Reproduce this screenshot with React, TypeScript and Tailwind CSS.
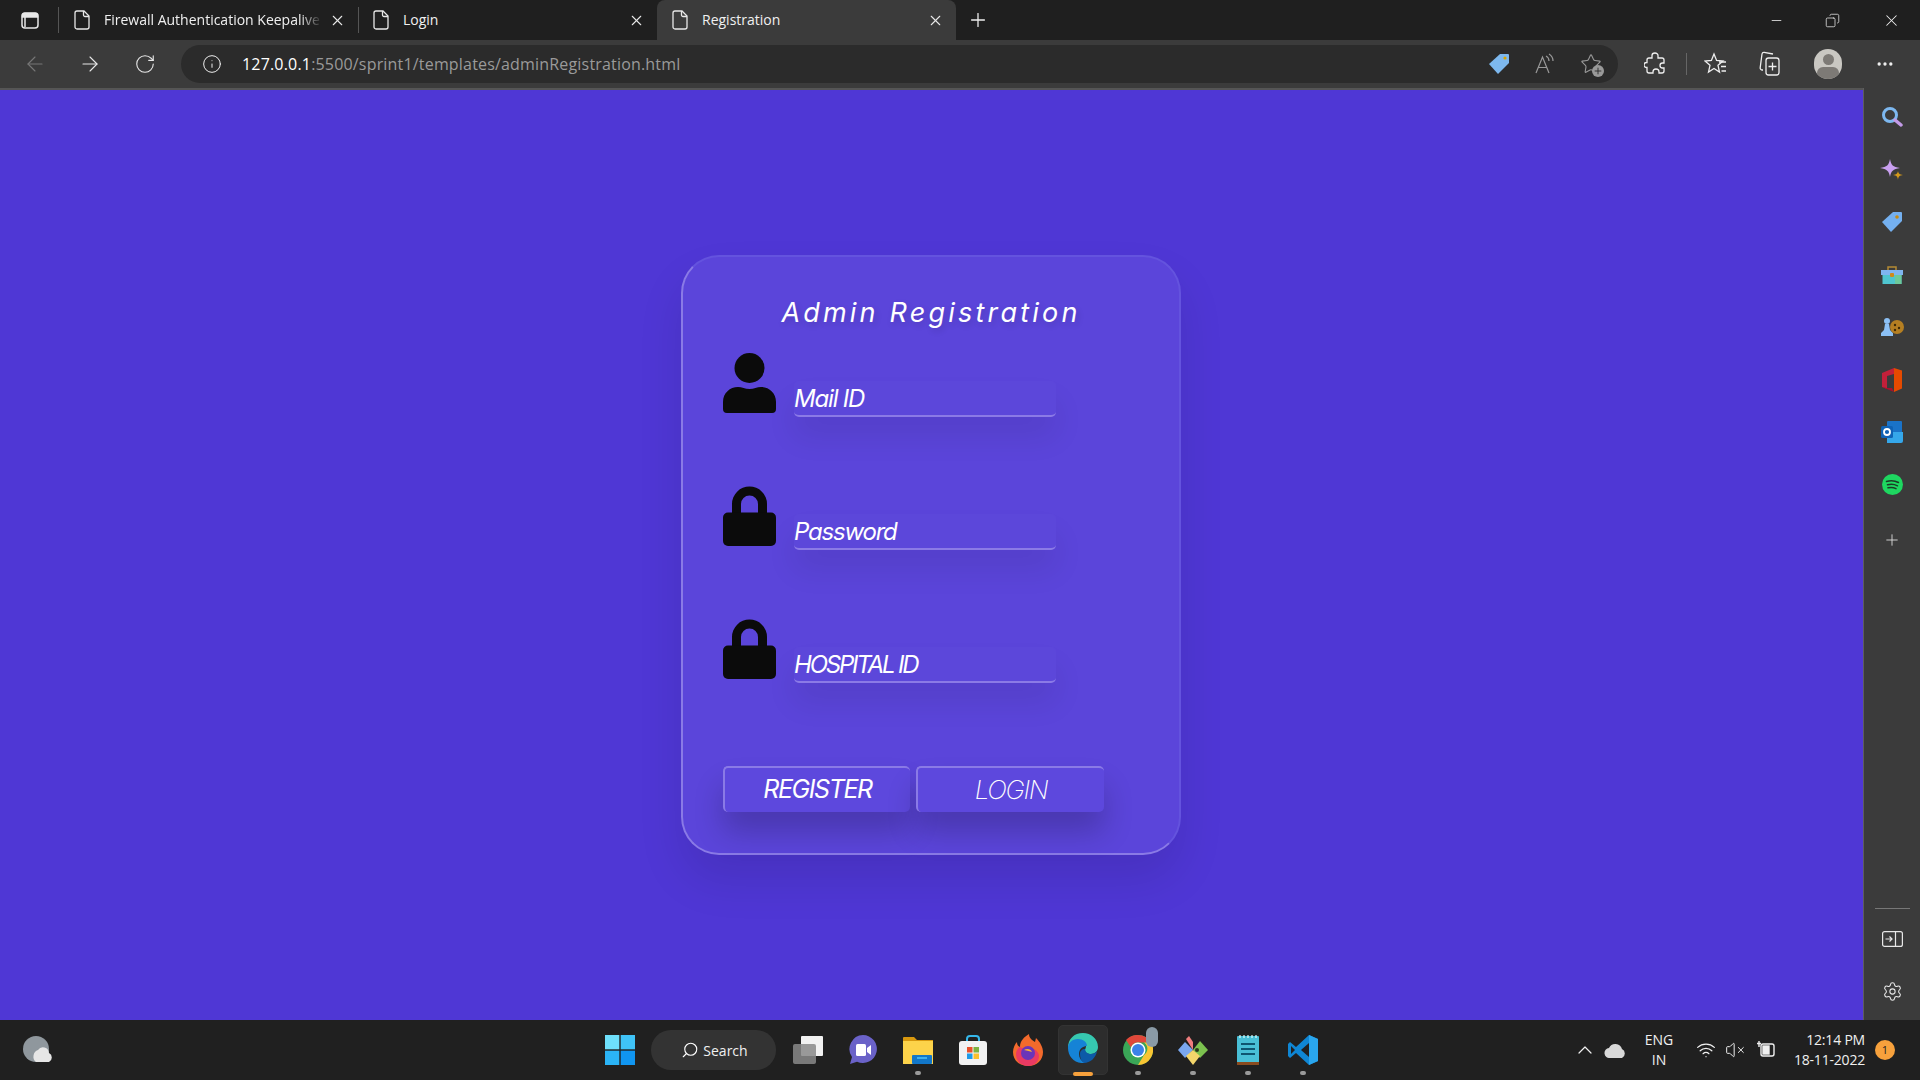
import React from "react"
import {
  ArrowLeft,
  ArrowRight,
  ChevronUp,
  Copy,
  Info,
  Minus,
  MoreHorizontal,
  Plus,
  RotateCw,
  Search,
  Settings,
  Star,
  VolumeX,
  Wifi,
  X,
} from "lucide-react"

const FileIcon = () => (
  <svg width="16" height="20" viewBox="0 0 16 20" fill="none" stroke="#e8e8e8" strokeWidth="1.3" className="shrink-0">
    <path d="M3 1h7l5 5v11a2 2 0 0 1-2 2H3a2 2 0 0 1-2-2V3a2 2 0 0 1 2-2z" />
    <path d="M9.5 1v4a1.5 1.5 0 0 0 1.5 1.5h4" />
  </svg>
)

const Tab = ({ title, active = false, fade = false }: { title: string; active?: boolean; fade?: boolean }) => (
  <div
    className={`flex items-center h-[40px] w-[299px] pl-[15px] pr-[12px] shrink-0 ${
      active ? "bg-[#3b3b3b] rounded-t-[8px]" : ""
    }`}
  >
    <FileIcon />
    <div
      className={`ml-[14px] flex-1 overflow-hidden whitespace-nowrap pb-[1px] text-[14px] text-[#f0f0f0] ${
        fade ? "[mask-image:linear-gradient(to_right,black_90%,transparent)]" : ""
      }`}
    >
      {title}
    </div>
    <X size={17} strokeWidth={1.5} className="ml-[7px] shrink-0 text-[#e8e8e8]" />
  </div>
)

const TabBar = () => (
  <div className="flex h-[40px] items-center bg-[#1f1f1f]">
    <div className="flex w-[58px] justify-center pl-[2px]">
      <svg width="18" height="17" viewBox="0 0 18 17" fill="none" stroke="#e8e8e8" strokeWidth="1.5">
        <rect x="1" y="1" width="16" height="15" rx="3" />
        <path d="M1.5 3.5a2 2 0 0 1 2-2h11a2 2 0 0 1 2 2V5h-15z" fill="#e8e8e8" />
        <path d="M4 5v10" />
      </svg>
    </div>
    <div className="h-[26px] w-px bg-[#555]" />
    <Tab title="Firewall Authentication Keepalive" fade />
    <div className="h-[26px] w-px bg-[#555]" />
    <div className="-ml-[1px]">
      <Tab title="Login" />
    </div>
    <Tab title="Registration" active />
    <Plus size={22} strokeWidth={1.4} className="ml-[11px] text-[#eee]" />
    <div className="ml-auto flex items-center text-[#eee]">
      <Minus size={15} strokeWidth={1.3} className="mr-[41px]" />
      <Copy size={15} strokeWidth={1.2} className="mr-[42px] -scale-x-100" />
      <X size={19} strokeWidth={1.3} className="mr-[19px]" />
    </div>
  </div>
)

const AddressBar = () => (
  <div className="flex h-[48px] items-center bg-[#3b3b3b]">
    <div className="flex w-[181px] shrink-0 items-center pl-[23px]">
      <ArrowLeft size={24} strokeWidth={1.1} className="text-[#777]" />
      <ArrowRight size={24} strokeWidth={1.1} className="ml-[31px] text-[#e8e8e8]" />
      <RotateCw size={22} strokeWidth={1.2} className="ml-[32px] text-[#e8e8e8]" />
    </div>
    <div className="flex h-[38px] w-[1437px] items-center rounded-full bg-[#2b2b2b] pl-[21px]">
      <Info size={20} strokeWidth={1.2} className="text-[#eee]" />
      <div className="ml-[20px] text-[16px] tracking-[0.18px] text-[#9a9a9a]">
        <span className="text-white">127.0.0.1</span>:5500/sprint1/templates/adminRegistration.html
      </div>
      <div className="ml-auto flex items-center pr-[16px]">
        <svg width="22" height="22" viewBox="0 0 22 22">
          <path d="M12 1h8a1 1 0 0 1 1 1v8L10 21 1 11z" fill="#7db8ee" />
          <circle cx="17" cy="5" r="1.6" fill="#d9a400" />
        </svg>
        <svg width="22" height="22" viewBox="0 0 22 22" fill="none" stroke="#999" strokeWidth="1.200" className="ml-[24px]">
          <path d="M2 20L8.500 4 15 20M4.500 14.500h8" />
          <path d="M12 3c2 1 3 2.500 3 5M15 1c2.500 1.500 4 3.500 4 7" />
        </svg>
        <div className="relative ml-[24px]">
          <Star size={22} strokeWidth={1.2} className="text-[#999]" />
          <div className="absolute -bottom-[2px] -right-[2px] flex h-[12px] w-[12px] items-center justify-center rounded-full bg-[#999]">
            <Plus size={10} strokeWidth={2} className="text-[#222]" />
          </div>
        </div>
      </div>
    </div>
    <svg width="22" height="24" viewBox="0 0 22 24" fill="none" stroke="#eee" strokeWidth="1.300" className="ml-[26px]">
      <path d="M8 3.500a3 2.500 0 0 1 6 0V6h4a2 2 0 0 1 2 2v3h-1.500a2.500 2.500 0 0 0 0 5H20v3a2 2 0 0 1-2 2h-3v-1a3 3 0 0 0-6 0v1H5a2 2 0 0 1-2-2v-3.500h-.5a2.500 2.500 0 0 1 0-5H3V8a2 2 0 0 1 2-2h3z" />
    </svg>
    <div className="ml-[20px] h-[22px] w-px bg-[#666]" />
    <svg width="24" height="24" viewBox="0 0 24 24" fill="none" stroke="#eee" strokeWidth="1.300" className="ml-[17px]">
      <path d="M10 2l2.600 6.500 6.400.5-5 4.300 1.500 6.700-5.500-3.500L4.500 20 6 13.300 1 9l6.400-.5z" />
      <path d="M15 10h7M17 14.500h5M17.500 19h4.500" />
    </svg>
    <svg width="24" height="26" viewBox="0 0 24 26" fill="none" stroke="#eee" strokeWidth="1.3" className="ml-[30px]">
      <path d="M5 19H4a2 2 0 0 1-1.800-2.400L4 3a2 2 0 0 1 2.200-1.700L15 3" />
      <rect x="8" y="7" width="13" height="17" rx="2.5" />
      <path d="M14.500 11.500v8M10.500 15.500h8" />
    </svg>
    <div className="ml-[32px] flex h-[30px] w-[28px] flex-col items-center overflow-hidden rounded-full bg-[#c9c7c2]">
      <div className="mt-[5px] h-[12px] w-[11px] rounded-full bg-[#7d7a76]" />
      <div className="mt-[2px] h-[14px] w-[22px] rounded-full bg-[#7d7a76]" />
    </div>
    <MoreHorizontal size={20} strokeWidth={2} className="ml-[33px] text-[#eee]" />
  </div>
)

const UserIcon = () => (
  <svg width="53" height="60" viewBox="0 0 53 60" fill="#0b0b0b" className="shrink-0">
    <circle cx="26.5" cy="15" r="15" />
    <path d="M15 34c4 0 7 2 11.500 2S34 34 38 34c8 0 15 6 15 15v7a4 4 0 0 1-4 4H4a4 4 0 0 1-4-4v-7c0-9 7-15 15-15z" />
  </svg>
)

const LockIcon = () => (
  <svg width="53" height="60" viewBox="0 0 53 60" fill="#0b0b0b" className="shrink-0">
    <path d="M9 27V18a17.500 17.500 0 0 1 35 0v9h-9V18a8.500 8.500 0 0 0-17 0v9z" />
    <rect y="26.500" width="53" height="33.500" rx="5" />
  </svg>
)

const Field = ({
  icon,
  placeholder,
  narrow = false,
}: {
  icon: React.ReactNode
  placeholder: string
  narrow?: boolean
}) => (
  <div className="flex items-start">
    {icon}
    <input
      type="text"
      placeholder={placeholder}
      className={`ml-[18px] mt-[28px] h-[36px] w-[262px] rounded-[5px] border-b-[2px] border-[#8b7ae6] bg-white/[0.01] pt-[1px] text-[24px] italic text-white shadow-[0_20px_30px_rgba(0,0,0,0.08)] outline-none placeholder:text-white ${
        narrow ? "tracking-[-2.2px]" : "tracking-[-1.2px]"
      }`}
    />
  </div>
)

const RegistrationCard = () => (
  <div className="mr-[1px] flex h-[600px] w-[500px] flex-col rounded-[38px] border-[2px] border-b-[#8a7ae6] border-l-[#8a7ae6] border-r-[#6453de] border-t-[#6453de] bg-[#5b45da] pl-[40px] shadow-[0_25px_45px_rgba(0,0,0,0.1)] [font-family:Inter,'Open_Sans',sans-serif]">
    <h1 className="-ml-[40px] mt-[36px] h-[40px] text-center text-[27px] font-normal italic leading-[40px] tracking-[3.2px] text-white [text-shadow:2px_3px_6px_rgba(0,0,0,0.15)]">
      Admin Registration
    </h1>
    <div className="mt-[20px] flex flex-col gap-[69px]">
      <Field icon={<UserIcon />} placeholder="Mail ID" />
      <Field icon={<LockIcon />} placeholder="Password" />
      <Field icon={<LockIcon />} placeholder="HOSPITAL ID" narrow />
    </div>
    <div className="mt-[83px] flex gap-[6px]">
      <button className="h-[46px] w-[187px] rounded-[5px] border-l-[2px] border-t-[2px] border-[#8a7ae6] bg-[#5d48dd] text-[25px] font-normal italic tracking-[-1.4px] text-white shadow-[0_20px_30px_rgba(0,0,0,0.2)]">
        REGISTER
      </button>
      <button className="h-[46px] w-[188px] rounded-[5px] border-l-[2px] border-t-[2px] border-[#8a7ae6] bg-[#5d48dd] pb-[2px] text-[26px] font-extralight italic tracking-[-1.4px] text-white shadow-[0_20px_30px_rgba(0,0,0,0.2)]">
        LOGIN
      </button>
    </div>
  </div>
)

const Slot = ({ children }: { children: React.ReactNode }) => (
  <div className="flex h-[52.5px] items-center justify-center">{children}</div>
)

const BottomSlot = ({ children }: { children: React.ReactNode }) => (
  <div className="flex h-[52px] items-center justify-center">{children}</div>
)

const Sidebar = () => (
  <div className="flex w-[57px] shrink-0 flex-col items-center border-l border-[#5e5e5e] bg-[#3b3b3b] pb-[3px] pt-[3px]">
    <Slot>
      <svg width="22" height="22" viewBox="0 0 22 22" fill="none">
        <circle cx="9" cy="9" r="6.500" stroke="#7db8f0" strokeWidth="3" />
        <path d="M14 14l6 5" stroke="#c39be8" strokeWidth="3.500" strokeLinecap="round" />
      </svg>
    </Slot>
    <Slot>
      <svg width="24" height="24" viewBox="0 0 24 24">
        <path d="M10 1c1 6 3 8 10 9-7 1-9 3-10 9-1-6-3-8-10-9 7-1 9-3 10-9z" fill="#c9a0f0" />
        <path d="M18 13c.4 2.500 1.500 3.600 5 4-3.500.4-4.600 1.500-5 5-.4-3.500-1.500-4.600-5-5 3.500-.4 4.600-1.500 5-4z" fill="#d49a1c" />
      </svg>
    </Slot>
    <Slot>
      <svg width="22" height="22" viewBox="0 0 22 22">
        <path d="M12 1h8a1 1 0 0 1 1 1v8L10 21 1 11z" fill="#74b0f0" />
        <circle cx="16" cy="6" r="1.800" fill="#c98a10" />
      </svg>
    </Slot>
    <Slot>
      <svg width="22" height="20" viewBox="0 0 22 20">
        <path d="M7 5V2h8v3" fill="none" stroke="#b48a35" strokeWidth="1.500" />
        <rect y="5" width="22" height="5" fill="#7fb5f0" />
        <rect x="1.500" y="10" width="19" height="9" fill="#4fc5cf" />
        <rect x="14" y="10" width="6.500" height="9" fill="#6dc99b" />
        <rect x="9" y="8" width="4" height="4" rx="1" fill="#d08a1a" />
      </svg>
    </Slot>
    <Slot>
      <svg width="24" height="20" viewBox="0 0 24 20">
        <circle cx="7" cy="4" r="3" fill="#8cc0f5" />
        <path d="M5 7h4l1 6 3 3v3H1v-3l3-3z" fill="#8cc0f5" />
        <circle cx="17" cy="10" r="7" fill="#b57f22" />
        <circle cx="15" cy="8" r="1.200" fill="#3e2a08" />
        <circle cx="19" cy="11" r="1.200" fill="#3e2a08" />
        <circle cx="15" cy="13" r="1.200" fill="#3e2a08" />
      </svg>
    </Slot>
    <Slot>
      <svg width="22" height="24" viewBox="0 0 22 24">
        <path d="M13 0l8 2.500v18L13 24V0z" fill="#e54a00" />
        <path d="M13 0L1 5v14l5 2V8l7-2z" fill="#c3203a" />
        <path d="M1 19l12 5-2-4-5 0z" fill="#a8102c" />
      </svg>
    </Slot>
    <Slot>
      <svg width="22" height="22" viewBox="0 0 22 22">
        <rect x="6" y="0" width="15" height="20" rx="1" fill="#1a73c8" />
        <path d="M6 11h16v9a2 2 0 0 1-2 2H6z" fill="#35a7ea" />
        <rect x="0" y="5" width="12" height="12" rx="1.500" fill="#0f62b5" />
        <circle cx="6" cy="11" r="3" fill="none" stroke="#fff" strokeWidth="1.800" />
      </svg>
    </Slot>
    <Slot>
      <svg width="21" height="21" viewBox="0 0 21 21" fill="none">
        <circle cx="10.500" cy="10.500" r="10.500" fill="#1ed760" />
        <path d="M4.500 7.500c4-1.200 8.500-.8 12 1M5.500 10.800c3.500-1 7-.6 10 1M6 13.800c3-.7 5.500-.5 8 .8" stroke="#1c3a26" strokeWidth="1.500" strokeLinecap="round" />
      </svg>
    </Slot>
    <div className="flex h-[58px] items-center justify-center">
      <Plus size={18} strokeWidth={1.2} className="text-[#ddd]" />
    </div>
    <div className="flex-1" />
    <div className="mb-[4px] h-px w-[35px] bg-[#777]" />
    <BottomSlot>
      <svg width="21" height="16" viewBox="0 0 21 16" fill="none" stroke="#e8e8e8" strokeWidth="1.200">
        <rect x="0.600" y="0.600" width="19.800" height="14.800" rx="2" />
        <path d="M13.500 1v14M3.500 8h6.500M7.500 5.500L10 8l-2.500 2.500" />
      </svg>
    </BottomSlot>
    <BottomSlot>
      <Settings size={21} strokeWidth={1.2} className="text-[#e8e8e8]" />
    </BottomSlot>
  </div>
)

const TaskIcon = ({
  children,
  running = false,
  active = false,
}: {
  children: React.ReactNode
  running?: boolean
  active?: boolean
}) => (
  <div className="relative flex h-[60px] w-[55px] items-center justify-center">
    {active && <div className="absolute left-[3px] top-[5px] h-[50px] w-[50px] rounded-[5px] border border-[#333] bg-[#2d2d2d]" />}
    <div className="relative flex">{children}</div>
    {running && <div className="absolute bottom-[5px] left-[25px] h-[4px] w-[6px] rounded-full bg-[#9a9a9a]" />}
    {active && <div className="absolute bottom-[4px] left-[18px] h-[4px] w-[20px] rounded-full bg-[#f7a13c]" />}
  </div>
)

const Taskbar = () => (
  <div className="flex h-[60px] items-center bg-[#202020]">
    <div className="flex w-[592px] shrink-0 pl-[22px]">
      <svg width="30" height="30" viewBox="0 0 30 30">
        <circle cx="14" cy="14" r="13" fill="#8f979d" />
        <path d="M14 27a7 7 0 0 1 2-12 6 6 0 0 1 11 3 5 5 0 0 1 0 9z" fill="#e6e6e6" />
      </svg>
    </div>
    <div className="flex w-[55px] justify-center">
      <svg width="30" height="30" viewBox="0 0 30 30">
        <rect width="14.300" height="14.300" fill="#6ee0fb" />
        <rect x="15.700" width="14.300" height="14.300" fill="#3fc3f7" />
        <rect y="15.700" width="14.300" height="14.300" fill="#2bb4f6" />
        <rect x="15.700" y="15.700" width="14.300" height="14.300" fill="#1095f0" />
      </svg>
    </div>
    <div className="ml-[4px] flex h-[40px] w-[125px] items-center justify-center rounded-full bg-[#333] pl-[2px]">
      <Search size={18} strokeWidth={1.5} className="-scale-x-100 text-white" />
      <span className="ml-[4px] text-[14px] text-[#f0f0f0]">Search</span>
    </div>
    <div className="ml-[4px] flex">
      <TaskIcon>
        <svg width="30" height="28" viewBox="0 0 30 28">
          <rect x="8" y="0" width="22" height="20" rx="1" fill="#f2f2f2" />
          <rect x="0" y="8" width="23" height="20" rx="2" fill="#8a8a8a" fillOpacity="0.85" />
        </svg>
      </TaskIcon>
      <TaskIcon>
        <svg width="30" height="30" viewBox="0 0 30 30">
          <path d="M15 0a14 14 0 1 1-6 26.700L2 29l2-7A14 14 0 0 1 15 0z" fill="#6a62c8" />
          <rect x="8" y="9" width="10" height="12" rx="1.500" fill="#fff" />
          <path d="M19 13l4-3v10l-4-3z" fill="#fff" />
        </svg>
      </TaskIcon>
      <TaskIcon running>
        <svg width="30" height="28" viewBox="0 0 30 28">
          <path d="M0 2a1 1 0 0 1 1-1h10l3 3h16v4H0z" fill="#d8980e" />
          <rect y="5" width="30" height="23" fill="#fdd34a" />
          <rect x="9" y="19" width="20" height="9" rx="1" fill="#1277c9" />
          <rect x="14" y="21" width="10" height="2" fill="#3fb0ee" />
        </svg>
      </TaskIcon>
      <TaskIcon>
        <svg width="28" height="30" viewBox="0 0 28 30">
          <path d="M8 7V4a3 3 0 0 1 3-3h6a3 3 0 0 1 3 3v3" fill="none" stroke="#35b7ea" strokeWidth="2" />
          <rect y="6" width="28" height="24" rx="3" fill="#f2f2f2" />
          <rect x="8" y="12" width="5.500" height="5.500" fill="#e8512a" />
          <rect x="14.500" y="12" width="5.500" height="5.500" fill="#7cb342" />
          <rect x="8" y="18.500" width="5.500" height="5.500" fill="#1e9be8" />
          <rect x="14.500" y="18.500" width="5.500" height="5.500" fill="#fbc02d" />
        </svg>
      </TaskIcon>
      <TaskIcon>
        <svg width="30" height="32" viewBox="0 0 30 32">
          <path d="M15 32C6 32 0 26 0 18 0 14 2 10 4 8c0 3 1 4 3 5 0-6 4-10 9-13 0 4 3 6 6 8l1-4c4 4 7 9 7 14 0 8-6 14-15 14z" fill="#f36a2c" />
          <path d="M15 32C8 32 3 27 3 20c0-3 2-6 4-7l4 2c5-1 8 1 10 0 3 2 5 4 5 7 0 6-5 10-11 10z" fill="#e93a63" />
          <circle cx="15" cy="19" r="7" fill="#6a35b8" />
          <path d="M11 16c3-2 7-1 8 2-2-1-5-1-8-2z" fill="#f9b233" />
        </svg>
      </TaskIcon>
      <TaskIcon active>
        <svg width="30" height="30" viewBox="0 0 30 30" className="-mt-[4px]">
          <path d="M15 0c8 0 15 6 15 14 0 4-3 7-7 7-3 0-6-1-6-4 0-1 1-2 1-4 0-3-3-5-7-5C6 8 2 11 0 15 0 6 6 0 15 0z" fill="#36c8b0" />
          <path d="M0 15c0-5 4-9 10-9 5 0 9 3 9 7-3 0-8 2-8 8 0 4 2 7 6 9C7 31 0 24 0 15z" fill="#1583d6" />
          <path d="M12 21c0-3 2-5 5-5 0 3 3 5 6 5 2 0 5-1 6-3-1 7-7 12-13 12-3-2-4-5-4-9z" fill="#0d5aa8" />
        </svg>
      </TaskIcon>
      <TaskIcon running>
        <div className="relative">
          <svg width="30" height="30" viewBox="0 0 30 30">
            <circle cx="15" cy="15" r="15" fill="#3aa657" />
            <path d="M15 0a15 15 0 0 1 13 7.500H15a7.500 7.500 0 0 0-7 5L3 5A15 15 0 0 1 15 0z" fill="#e0473a" />
            <path d="M28 7.500A15 15 0 0 1 15 30l6-10a7.500 7.500 0 0 0 0-12.500z" fill="#f8c533" />
            <circle cx="15" cy="15" r="7.500" fill="#fff" />
            <circle cx="15" cy="15" r="6" fill="#3b82e8" />
          </svg>
          <div className="absolute -right-[5px] -top-[8px] h-[20px] w-[12px] rounded-full bg-[#8a9aa6]" />
        </div>
      </TaskIcon>
      <TaskIcon running>
        <svg width="30" height="30" viewBox="0 0 30 30">
          <path d="M15 15L8 4l3-3 4 6z" fill="#ef7d7d" />
          <path d="M15 15l7-9 8 9-8 8z" fill="#7cc24f" />
          <path d="M15 15L7 7l-7 8 7 8z" fill="#7aa7ef" />
          <path d="M15 15l-7 6 7 9 7-9z" fill="#f4d66b" />
          <circle cx="19" cy="15" r="2" fill="#2a3a1c" />
        </svg>
      </TaskIcon>
      <TaskIcon running>
        <svg width="22" height="30" viewBox="0 0 22 30">
          <rect y="1" width="22" height="29" rx="1" fill="#49bfd6" />
          <rect y="27" width="22" height="3" fill="#8a4b1f" />
          <path d="M4 9h14M4 14h14M4 19h14" stroke="#0f5570" strokeWidth="2" />
          <path d="M3 0v3M7 0v3M11 0v3M15 0v3M19 0v3" stroke="#dff" strokeWidth="1.200" />
        </svg>
      </TaskIcon>
      <TaskIcon running>
        <svg width="30" height="30" viewBox="0 0 30 30">
          <path d="M21 0l9 4v22l-9 4L8 18l-6 5-2-2v-12l2-2 6 5z" fill="#0f86d4" />
          <path d="M21 8l-8 7 8 7z" fill="#202020" />
          <path d="M3 11l4 4-4 4z" fill="#202020" />
          <path d="M21 0l9 4v22l-9 4z" fill="#2aa6ee" />
        </svg>
      </TaskIcon>
    </div>
    <div className="ml-auto flex items-center pr-[25px] text-[#f0f0f0]">
      <ChevronUp size={24} strokeWidth={1.2} />
      <svg width="24" height="16" viewBox="0 0 24 16" className="ml-[7px]">
        <path d="M6 16a5 5 0 0 1-1-10 7 7 0 0 1 13 1 5 5 0 0 1 0 9z" fill="#d8d8d8" />
      </svg>
      <div className="ml-[11px] w-[40px] text-center text-[14px] leading-[20px]">
        ENG
        <br />
        IN
      </div>
      <Wifi size={20} strokeWidth={1.5} className="ml-[17px]" />
      <VolumeX size={20} strokeWidth={1.2} className="ml-[9px]" />
      <svg width="20" height="20" viewBox="0 0 20 20" fill="none" stroke="#f0f0f0" strokeWidth="1.400" className="ml-[11px]">
        <rect x="5" y="4" width="13" height="12" rx="2" />
        <rect x="7" y="6" width="6" height="8" fill="#f0f0f0" />
        <path d="M3 1v6M1 3.500h4" />
      </svg>
      <div className="ml-[9px] w-[80px] text-right text-[14px] leading-[20px] tracking-[-0.2px]">
        12:14 PM
        <br />
        18-11-2022
      </div>
      <div className="ml-[10px] flex h-[20px] w-[20px] items-center justify-center rounded-full bg-[#f7a13c] text-[11px] text-[#222]">
        1
      </div>
    </div>
  </div>
)

const App = () => {
  return (
    <div className="flex h-[1080px] w-[1920px] flex-col overflow-hidden [font-family:'Open_Sans','Noto_Sans',sans-serif]">
      <TabBar />
      <AddressBar />
      <div className="flex h-[932px]">
        <div className="flex flex-1 items-center justify-center border-t-[2px] border-[#555] bg-[#4f37d5]">
          <RegistrationCard />
        </div>
        <Sidebar />
      </div>
      <Taskbar />
    </div>
  )
}

export default App
